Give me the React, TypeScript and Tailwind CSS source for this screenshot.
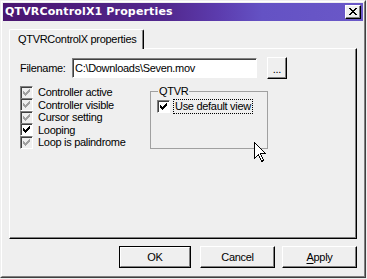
import React from "react";

const raised =
  "border border-t-white border-l-white border-r-black border-b-black bg-[#efefef] shadow-[inset_-1px_-1px_0_#808080]";

function CheckMark({ color }: { color: string }) {
  return (
    <svg width="13" height="13" viewBox="0 0 13 13" className="absolute -left-px -top-px" shapeRendering="crispEdges">
      <path
        fill={color}
        d="M3 5h1v3h-1z M4 6h1v3h-1z M5 7h1v3h-1z M6 6h1v3h-1z M7 5h1v3h-1z M8 4h1v3h-1z M9 3h1v3h-1z"
      />
    </svg>
  );
}

function CheckBox({ disabled }: { disabled?: boolean }) {
  return (
    <span
      className={
        "relative block h-[13px] w-[13px] shrink-0 border border-t-[#808080] border-l-[#808080] border-r-white border-b-white shadow-[inset_1px_1px_0_#404040] " +
        (disabled ? "bg-[#efefef]" : "bg-white")
      }
    >
      <CheckMark color={disabled ? "#a0a0a0" : "#000"} />
    </span>
  );
}

const options = [
  { label: "Controller active", disabled: true },
  { label: "Controller visible", disabled: true },
  { label: "Cursor setting", disabled: true },
  { label: "Looping", disabled: false },
  { label: "Loop is palindrome", disabled: true },
];

export default function App() {
  return (
    <div className="h-[279px] w-[367px] bg-[#efefef]">
      <div
        className="relative h-[278px] w-[366px] border border-t-[#efefef] border-l-[#efefef] border-r-[#404040] border-b-[#404040] text-[11px] tracking-[-0.3px] text-black"
        style={{ fontFamily: '"Liberation Sans", Arial, sans-serif' }}
      >
        <div className="flex h-full flex-col border border-t-white border-l-white border-r-[#808080] border-b-[#808080] p-px">
          {/* title bar */}
          <div className="flex h-[18px] items-center justify-between bg-[linear-gradient(to_right,#4a1670,#52288e_45%,#5c3cae_60%,#6452c4_72%,#6a58c8)] pl-[2px] pr-[2px]">
            <span
              className="text-[11px] font-bold tracking-[0.15px] text-white"
              style={{ fontFamily: '"DejaVu Sans", Verdana, sans-serif' }}
            >
              QTVRControlX1 Properties
            </span>
            <button className={"flex h-[14px] w-[16px] items-center justify-center " + raised}>
              <svg width="8" height="7" viewBox="0 0 8 7" shapeRendering="crispEdges" className="-mt-px">
                <path
                  fill="#000"
                  d="M0 0h2v1h-2z M6 0h2v1h-2z M1 1h2v1h-2z M5 1h2v1h-2z M2 2h4v1h-4z M3 3h2v1h-2z M2 4h4v1h-4z M1 5h2v1h-2z M5 5h2v1h-2z M0 6h2v1h-2z M6 6h2v1h-2z"
                />
              </svg>
            </button>
          </div>

          <div className="flex flex-1 flex-col px-[6px] pt-[8px]">
            {/* tab */}
            <div className="flex h-[19px]">
              <div className="relative z-10 flex h-[20px] w-[135px] items-center rounded-t-[2px] border-t border-l border-r border-t-white border-l-white border-r-black bg-[#efefef] pl-[8px] shadow-[inset_-1px_0_0_#808080]">
                QTVRControlX properties
              </div>
            </div>

            {/* panel */}
            <div className="flex h-[191px] flex-col border border-t-white border-l-white border-r-black border-b-black bg-[#efefef] px-[10px] pt-[8px] shadow-[inset_-1px_-1px_0_#808080]">
              <div className="flex h-[22px] items-center">
                <span className="w-[52px]">Filename:</span>
                <div className="flex h-[20px] w-[185px] items-center border border-t-[#808080] border-l-[#808080] border-r-white border-b-white bg-white pl-[2px] shadow-[inset_1px_1px_0_#404040]">
                  C:\Downloads\Seven.mov
                </div>
                <button className={"ml-[10px] flex h-[22px] w-[20px] items-center justify-center pt-[3px] text-[11px] " + raised}>
                  ...
                </button>
              </div>

              <div className="mt-[7px] flex items-start">
                <div className="flex w-[130px] flex-col">
                  {options.map((o) => (
                    <label key={o.label} className="flex h-[12.5px] items-center gap-[5px]">
                      <CheckBox disabled={o.disabled} />
                      <span>{o.label}</span>
                    </label>
                  ))}
                </div>

                <fieldset className="-mt-px h-[64px] w-[118px] border border-[#a0a0a0] pl-[6px]">
                  <legend className="ml-px px-px leading-[13px]">QTVR</legend>
                  <label className="mt-[2px] flex h-[13px] items-center gap-[3px]">
                    <CheckBox />
                    <span className="border border-dotted border-black px-px leading-[13px]">Use default view</span>
                  </label>
                </fieldset>
              </div>
            </div>

            {/* buttons */}
            <div className="mt-[7px] flex h-[22px] justify-end">
              <button className="h-[22px] w-[72px] border border-black">
                <span className="flex h-full w-full items-center justify-center border border-t-white border-l-white border-r-[#808080] border-b-[#808080] bg-[#efefef]">
                  OK
                </span>
              </button>
              <button className={"ml-[9px] h-[22px] w-[75px] " + raised}>Cancel</button>
              <button className={"ml-[7px] h-[22px] w-[75px] " + raised}>
                <span className="underline underline-offset-2">A</span>pply
              </button>
            </div>
          </div>
        </div>

        {/* mouse pointer */}
        <svg
          width="13"
          height="21"
          viewBox="0 0 13 21"
          className="absolute left-[253px] top-[141px]"
          shapeRendering="crispEdges"
        >
          <path d="M0.5 0.5V16.5L4.5 12.5L7.5 19.5L9.5 18.5L6.5 11.5H11.5Z" fill="#fff" stroke="#000" strokeWidth="1" />
        </svg>
      </div>
    </div>
  );
}
